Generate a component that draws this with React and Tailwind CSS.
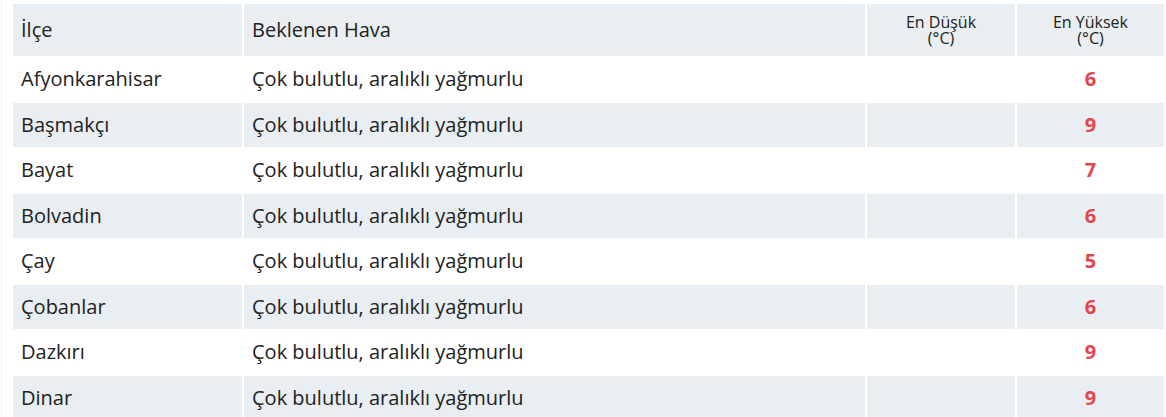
import React from 'react';

// Afyonkarahisar ilçeleri için hava tahmini tablosu
const rows = [
  { ilce: 'Afyonkarahisar', hava: 'Çok bulutlu, aralıklı yağmurlu', min: '', max: 6 },
  { ilce: 'Başmakçı', hava: 'Çok bulutlu, aralıklı yağmurlu', min: '', max: 9 },
  { ilce: 'Bayat', hava: 'Çok bulutlu, aralıklı yağmurlu', min: '', max: 7 },
  { ilce: 'Bolvadin', hava: 'Çok bulutlu, aralıklı yağmurlu', min: '', max: 6 },
  { ilce: 'Çay', hava: 'Çok bulutlu, aralıklı yağmurlu', min: '', max: 5 },
  { ilce: 'Çobanlar', hava: 'Çok bulutlu, aralıklı yağmurlu', min: '', max: 6 },
  { ilce: 'Dazkırı', hava: 'Çok bulutlu, aralıklı yağmurlu', min: '', max: 9 },
  { ilce: 'Dinar', hava: 'Çok bulutlu, aralıklı yağmurlu', min: '', max: 9 },
];

const App = () => {
  return (
    <div className="w-[1166px] h-[417px] overflow-hidden bg-white font-['Open_Sans',sans-serif] text-[#222]">
      <div className="ml-[1px] border-l border-[#eef0f2] h-full pl-[9px] pt-[3px]">
        <table className="w-[1155px] border-separate border-spacing-x-[2px] border-spacing-y-[1px] table-fixed">
          <colgroup>
            <col className="w-[229px]" />
            <col className="w-[621px]" />
            <col className="w-[148px]" />
            <col />
          </colgroup>
          <thead>
            <tr className="bg-[#e8eef1]">
              <th className="h-[52px] px-2 text-left font-normal text-[20px]">İlçe</th>
              <th className="h-[52px] px-2 text-left font-normal text-[20px]">Beklenen Hava</th>
              <th className="h-[52px] px-2 text-center font-normal text-[16px] leading-[16px]">
                En Düşük<br />(°C)
              </th>
              <th className="h-[52px] px-2 text-center font-normal text-[16px] leading-[16px]">
                En Yüksek<br />(°C)
              </th>
            </tr>
          </thead>
          <tbody>
            {rows.map((r, i) => (
              <tr key={r.ilce} className={i % 2 === 1 ? 'bg-[#e8eef1]' : 'bg-white'}>
                <td className="h-[44.5px] px-2 text-[20px]">{r.ilce}</td>
                <td className="h-[44.5px] px-2 text-[20px]">{r.hava}</td>
                <td className="h-[44.5px] px-2 text-center text-[20px]">{r.min}</td>
                <td className="h-[44.5px] px-2 text-center text-[20px] font-bold text-[#e2454b]">{r.max}</td>
              </tr>
            ))}
          </tbody>
        </table>
      </div>
    </div>
  );
};

export default App;
